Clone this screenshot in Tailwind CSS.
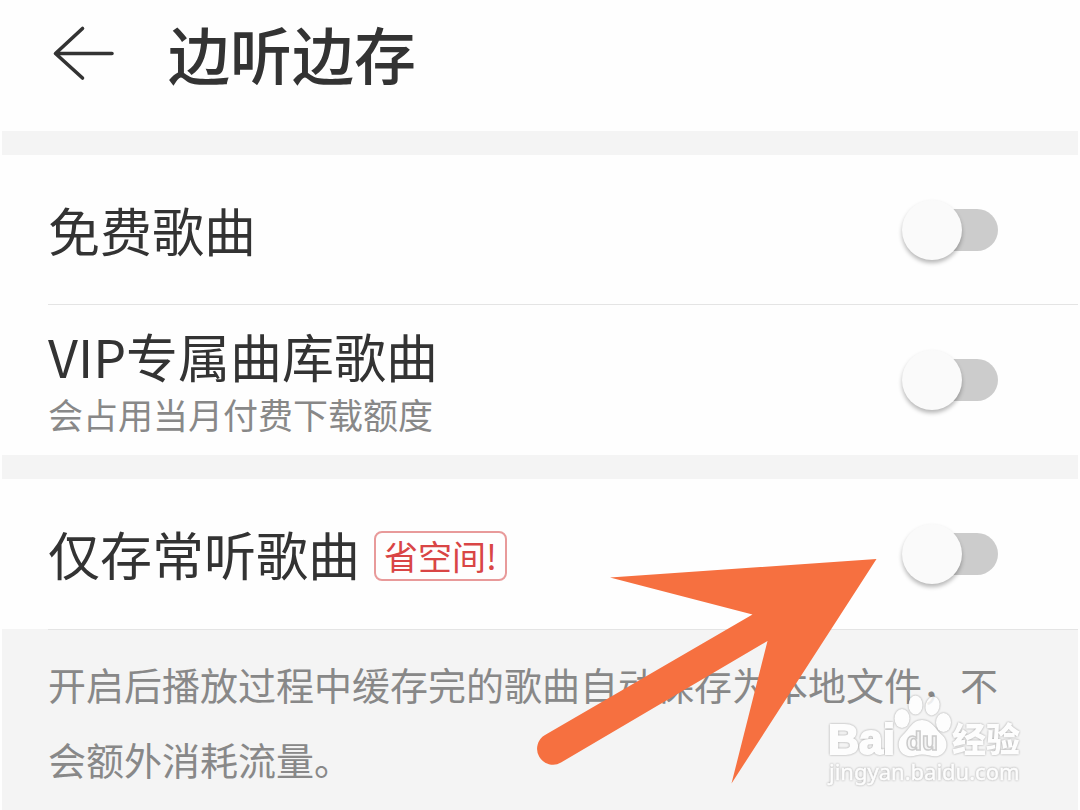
<!DOCTYPE html>
<html lang="zh-CN">
<head>
<meta charset="utf-8">
<meta name="viewport" content="width=device-width, initial-scale=1">
<title>边听边存</title>
<script src="https://cdn.jsdelivr.net/npm/@tailwindcss/browser@4"></script>
</head>
<body class="relative flex min-h-screen flex-col overflow-x-hidden bg-[#fefefe] px-0.5 font-['Noto_Sans_CJK_SC',sans-serif] text-[#333333]">
  <header class="flex h-[131px] items-start gap-[52px] pt-2 pl-[50px]">
    <button type="button" aria-label="返回" class="mt-4 h-[60px] w-[64px] shrink-0">
      <svg viewBox="0 0 64 60" class="h-full w-full" fill="none" stroke="#333333" stroke-width="3.6" stroke-linecap="round" stroke-linejoin="round"><path d="M30.500 4.500L3.500 29.500L30.500 54M4 29.500H60"/></svg>
    </button>
    <h1 class="text-[62px] leading-[90px] font-medium">边听边存</h1>
  </header>

  <main class="flex grow flex-col">
    <section class="border-t-24 border-[#f4f4f4]">
      <div class="ml-[46px] flex h-[150px] items-center justify-between border-b border-[#e4e4e4] pr-20">
        <label for="free" class="text-[52px] leading-[76px]">免费歌曲</label>
        <input id="free" type="checkbox" role="switch" class="relative h-[60px] w-24 shrink-0 appearance-none before:absolute before:top-[9px] before:right-0 before:h-[42px] before:w-20 before:rounded-full before:bg-[#cccccc] after:absolute after:top-0 after:left-0 after:size-[60px] after:rounded-full after:bg-[#fafafa] after:shadow-[0_3px_4px_rgba(0,0,0,0.28)] checked:before:bg-red-200 checked:after:left-9">
      </div>
      <div class="ml-[46px] flex h-[150px] items-center justify-between pr-20">
        <label for="vip" class="flex flex-col pt-1">
          <span class="text-[52px] leading-[64px]">VIP专属曲库歌曲</span>
          <span class="text-[35px] leading-[52px] text-[#888888]">会占用当月付费下载额度</span>
        </label>
        <input id="vip" type="checkbox" role="switch" class="relative h-[60px] w-24 shrink-0 appearance-none before:absolute before:top-[9px] before:right-0 before:h-[42px] before:w-20 before:rounded-full before:bg-[#cccccc] after:absolute after:top-0 after:left-0 after:size-[60px] after:rounded-full after:bg-[#fafafa] after:shadow-[0_3px_4px_rgba(0,0,0,0.28)] checked:before:bg-red-200 checked:after:left-9">
      </div>
    </section>

    <section class="flex grow flex-col border-t-24 border-[#f4f4f4]">
      <div class="ml-[46px] flex h-[150px] items-center justify-between pr-20">
        <label for="frequent" class="flex items-center gap-[14px]">
          <span class="text-[52px] leading-[76px]">仅存常听歌曲</span>
          <span class="mt-1 rounded-lg border-2 border-[#e89a9a] px-2 text-[34px] leading-[46px] text-[#d94545]">省空间!</span>
        </label>
        <input id="frequent" type="checkbox" role="switch" class="relative h-[60px] w-24 shrink-0 appearance-none before:absolute before:top-[9px] before:right-0 before:h-[42px] before:w-20 before:rounded-full before:bg-[#cccccc] after:absolute after:top-0 after:left-0 after:size-[60px] after:rounded-full after:bg-[#fafafa] after:shadow-[0_3px_4px_rgba(0,0,0,0.28)] checked:before:bg-red-200 checked:after:left-9">
      </div>
      <div class="grow bg-[#f4f4f4] pl-[46px]">
        <p class="border-t border-[#e4e4e4] pt-4 pr-16 text-[38px] leading-[75px] text-[#888888]">开启后播放过程中缓存完的歌曲自动保存为本地文件，不会额外消耗流量。</p>
      </div>
    </section>
  </main>

  <!-- Pointer to the last switch -->
  <svg class="pointer-events-none absolute top-[550px] left-[530px] h-[240px] w-[360px]" viewBox="530 550 360 240" aria-hidden="true">
    <path fill="#f67040" d="M876.500 559L610 577.500L752.500 614.500L545 735A15.500 15.500 0 0 0 561 762.500L767.500 641L731.500 783.500Z"/>
  </svg>

  <!-- Watermark -->
  <svg class="pointer-events-none absolute top-[690px] left-[820px] h-[110px] w-[210px] opacity-85 drop-shadow-[0_0_1px_rgba(0,0,0,0.4)]" viewBox="820 690 210 110" role="img" aria-label="Baidu 经验">
    <g fill="#ffffff">
      <text x="828" y="754" font-family="Liberation Sans" font-weight="700" font-size="43" stroke="#ffffff" stroke-width="2">Bai</text>
      <ellipse cx="902" cy="718.500" rx="7.500" ry="9.500"/>
      <ellipse cx="915.500" cy="705" rx="7" ry="9.500"/>
      <ellipse cx="932.500" cy="706" rx="7" ry="9.500" transform="rotate(12 932.500 706)"/>
      <ellipse cx="943.500" cy="722.500" rx="7.500" ry="9.500"/>
      <path d="M922 720C912 720 910 729 902 736C896 742 898 754 908 756C914 757 917 754.500 922 754.500C928 754.500 932 757 938 756C948 753 949 741 942 735C935 729 932 720 922 720Z"/>
      <text x="952" y="752" font-family="Noto Sans CJK SC" font-weight="900" font-size="34">经验</text>
      <text x="829" y="780" font-family="Noto Sans" font-size="22" stroke="#ffffff" stroke-width="0.500">jingyan.baidu.com</text>
    </g>
    <text x="906" y="750" font-family="Liberation Sans" font-weight="700" font-size="26" fill="#f4f4f4" stroke="#c4c4c4" stroke-width="1.500">du</text>
  </svg>
</body>
</html>
